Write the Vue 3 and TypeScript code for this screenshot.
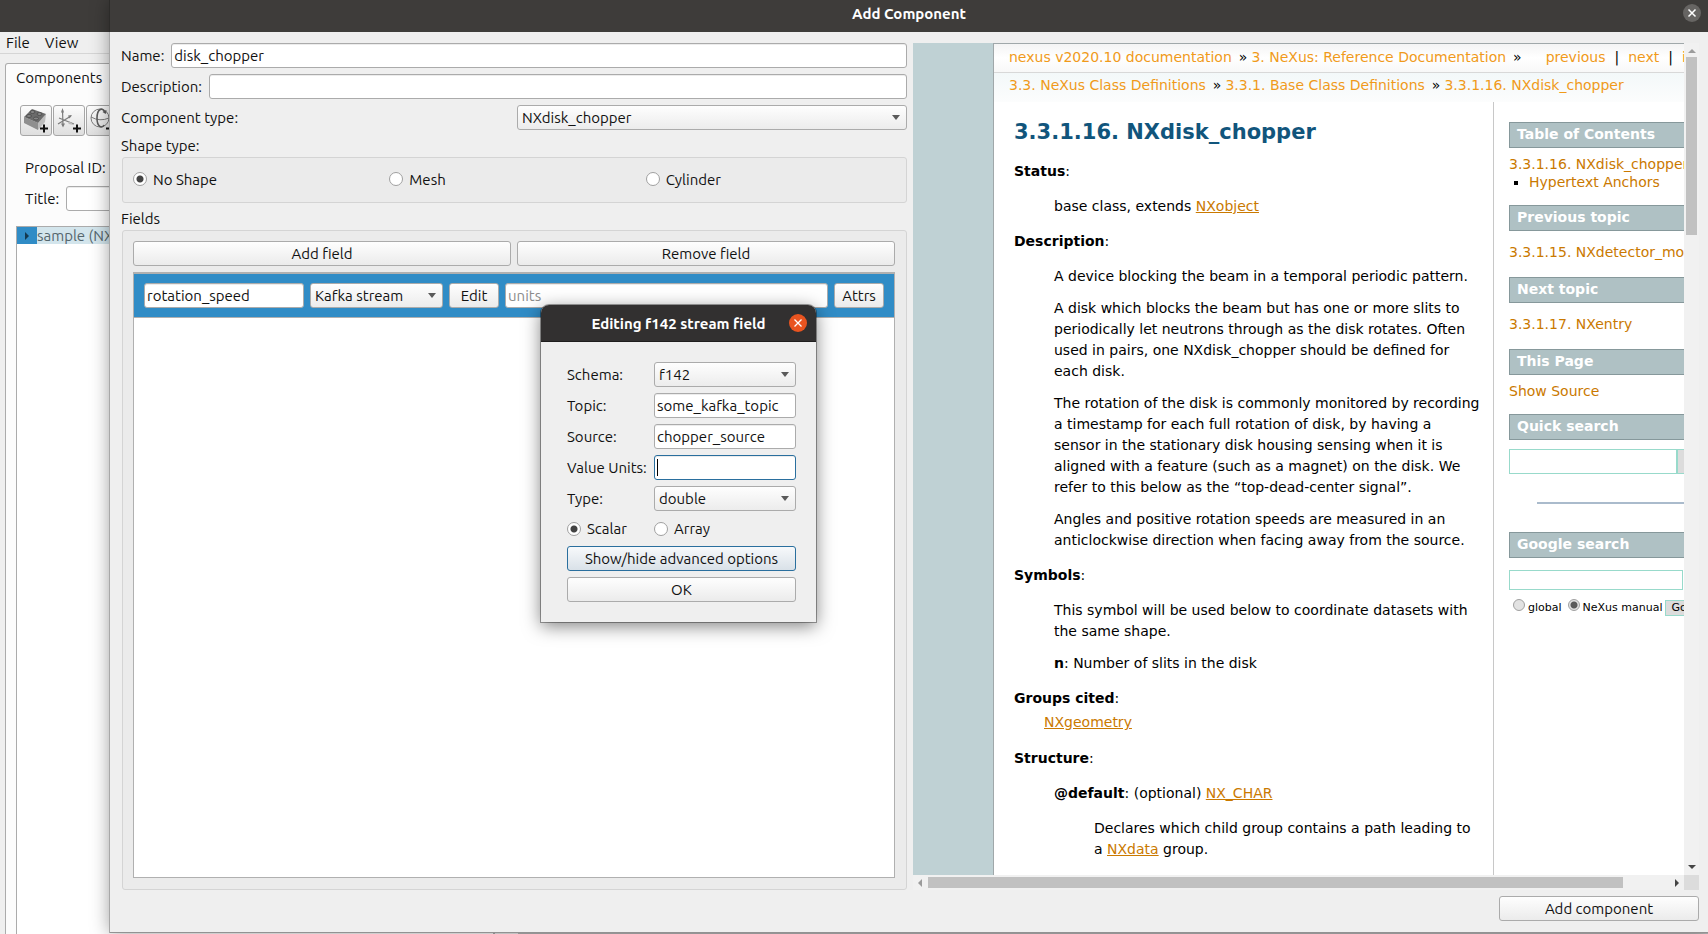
<script setup lang="ts">
import { ref } from 'vue'

const name = ref('disk_chopper')
const description = ref('')
const title = ref('')
const componentType = ref('NXdisk_chopper')
const shapes = ['No Shape', 'Mesh', 'Cylinder']
const shape = ref('No Shape')
const fieldName = ref('rotation_speed')
const fieldType = ref('Kafka stream')
const fieldUnits = ref('')
const schema = ref('f142')
const topic = ref('some_kafka_topic')
const source = ref('chopper_source')
const valueUnits = ref('')
const valueType = ref('double')
const arity = ref('Scalar')
const quickSearch = ref('')
const googleSearch = ref('')
const searchScope = ref('manual')
</script>

<template>
  <div class="desktop">
    <div class="main-window">
      <div class="titlebar"></div>
      <nav class="menubar">
        <button type="button">File</button>
        <button type="button">View</button>
      </nav>
      <div class="panes">
        <section class="tab-pane">
          <h2 class="tab">Components</h2>
          <div class="toolbar">
            <button type="button" class="tool" aria-label="Add component">
              <svg viewBox="0 0 32 31" width="32" height="31">
                <path d="M4 12 18 18 18 25 4 18Z" fill="#8f8f8f" />
                <path d="M18 18 26 9 25 17 18 25Z" fill="#bdbdbd" />
                <path d="M4 12 12 4 26 9 18 18Z" fill="#6b6b6b" />
                <g fill="#858585" stroke="#505050" stroke-width="1">
                  <ellipse cx="12.500" cy="7" rx="2.500" ry="1.500" />
                  <ellipse cx="19.500" cy="9" rx="2.500" ry="1.500" />
                  <ellipse cx="9" cy="11" rx="2.500" ry="1.500" />
                  <ellipse cx="16" cy="13.500" rx="2.500" ry="1.500" />
                </g>
                <path d="M20 23.500H28M24 19.500V27.500" stroke="#111" stroke-width="2" />
              </svg>
            </button>
            <button type="button" class="tool" aria-label="Add translation">
              <svg viewBox="0 0 32 31" width="32" height="31" fill="none" stroke="#7c7c7c">
                <path d="M9.500 5 10 21M5 19 18 11M6 13 21 19" stroke-width="1.200" />
                <path d="M8 7.500 9.500 3 11 7.500ZM8 18.500 10 22.500 12 18.500ZM15 10.500 19 10 16.500 13.500Z" fill="#7c7c7c" stroke="none" />
                <path d="M16 16 21 20 15.500 19Z" fill="#bbb" stroke="none" />
                <path d="M20 23.500H28M24 19.500V27.500" stroke="#111" stroke-width="2" />
              </svg>
            </button>
            <button type="button" class="tool" aria-label="Add rotation">
              <svg viewBox="0 0 32 31" width="32" height="31" fill="none" stroke="#7c7c7c">
                <circle cx="14" cy="13" r="9" />
                <path d="M5 12Q14 17 23 13" />
                <path d="M19 8C17 1 11 4 11 13S16 24 18 20" stroke="#5c5c5c" stroke-width="1.600" />
                <path d="M16.500 7 20 9 20.500 5Z" fill="#5c5c5c" stroke="none" />
                <path d="M20 23.500H28M24 19.500V27.500" stroke="#111" stroke-width="2" />
              </svg>
            </button>
          </div>
          <p class="proposal">Proposal ID:</p>
          <div class="title-row">
            <label for="title">Title:</label>
            <input id="title" v-model="title" class="box" type="text" />
          </div>
          <div class="tree">
            <div class="tree-row">
              <span class="branch"><i></i></span>
              <span class="leaf">sample (NXsample)</span>
            </div>
          </div>
        </section>
        <div class="viewer"></div>
      </div>
    </div>

    <section class="dialog" aria-label="Add Component">
      <header class="titlebar">
        <h1>Add Component</h1>
        <button type="button" class="close" aria-label="Close">
          <svg viewBox="0 0 18 18" width="18" height="18"><path d="M5.500 5.500 12.500 12.500M12.500 5.500 5.500 12.500" stroke="#fff" stroke-width="1.500" /></svg>
        </button>
      </header>

      <div class="dialog-body">
        <div class="form">
          <div class="lines">
            <div class="line">
              <label for="name">Name:</label>
              <input id="name" v-model="name" class="box" type="text" />
            </div>
            <div class="line">
              <label for="description">Description:</label>
              <input id="description" v-model="description" class="box" type="text" />
            </div>
            <div class="halves">
              <label for="ctype">Component type:</label>
              <span class="combo">
                <select id="ctype" v-model="componentType"><option>NXdisk_chopper</option></select>
              </span>
            </div>
          </div>
          <p class="caption">Shape type:</p>
          <div class="frame shapes">
            <label v-for="s in shapes" :key="s" class="radio">
              <input v-model="shape" type="radio" name="shape" :value="s" />{{ s }}
            </label>
          </div>
          <p class="caption">Fields</p>
          <div class="frame fields">
            <div class="halves">
              <button type="button" class="push">Add field</button>
              <button type="button" class="push">Remove field</button>
            </div>
            <div class="list">
              <div class="item">
                <input v-model="fieldName" class="box field-name" type="text" aria-label="Field name" />
                <span class="combo field-type">
                  <select v-model="fieldType" aria-label="Field type"><option>Kafka stream</option></select>
                </span>
                <button type="button" class="push small">Edit</button>
                <input v-model="fieldUnits" class="box field-units" type="text" placeholder="units" aria-label="Units" />
                <button type="button" class="push small">Attrs</button>
              </div>
            </div>
          </div>
        </div>

        <div class="docs">
          <div class="viewport">
            <div class="site">
              <div class="page">
                <nav class="crumbs">
                  <div class="crumb-row">
                    <a href="#">nexus v2020.10 documentation</a><i>»</i><a href="#">3. NeXus: Reference Documentation</a><i>»</i>
                    <span class="related"><a href="#">previous</a><b>|</b><a href="#">next</a><b>|</b><a href="#">index</a></span>
                  </div>
                  <div class="crumb-row second">
                    <a href="#">3.3. NeXus Class Definitions</a><i>»</i><a href="#">3.3.1. Base Class Definitions</a><i>»</i><a href="#">3.3.1.16. NXdisk_chopper</a>
                  </div>
                </nav>
                <div class="columns">
                  <article class="content">
                    <h2>3.3.1.16. NXdisk_chopper</h2>
                    <p><strong>Status</strong>:</p>
                    <div class="quote"><p>base class, extends <a href="#">NXobject</a></p></div>
                    <p><strong>Description</strong>:</p>
                    <div class="quote">
                      <p>A device blocking the beam in a temporal periodic pattern.</p>
                      <p>A disk which blocks the beam but has one or more slits to periodically let neutrons through as the disk rotates. Often used in pairs, one NXdisk_chopper should be defined for each disk.</p>
                      <p>The rotation of the disk is commonly monitored by recording a timestamp for each full rotation of disk, by having a sensor in the stationary disk housing sensing when it is aligned with a feature (such as a magnet) on the disk. We refer to this below as the “top-dead-center signal”.</p>
                      <p>Angles and positive rotation speeds are measured in an anticlockwise direction when facing away from the source.</p>
                    </div>
                    <p><strong>Symbols</strong>:</p>
                    <div class="quote">
                      <p>This symbol will be used below to coordinate datasets with the same shape.</p>
                      <p><strong>n</strong>: Number of slits in the disk</p>
                    </div>
                    <p class="cited"><strong>Groups cited</strong>:</p>
                    <p class="cited-list"><a href="#">NXgeometry</a></p>
                    <p><strong>Structure</strong>:</p>
                    <div class="quote">
                      <p class="term"><strong>@default</strong>: (optional) <a href="#">NX_CHAR</a></p>
                      <div class="quote"><p>Declares which child group contains a path leading to a <a href="#">NXdata</a> group.</p></div>
                    </div>
                  </article>
                  <aside class="sidebar">
                    <h3>Table of Contents</h3>
                    <div class="toc">
                      <a href="#">3.3.1.16. NXdisk_chopper</a>
                      <ul><li><a href="#">Hypertext Anchors</a></li></ul>
                    </div>
                    <h3>Previous topic</h3>
                    <p class="topic"><a href="#">3.3.1.15. NXdetector_module</a></p>
                    <h3>Next topic</h3>
                    <p class="topic"><a href="#">3.3.1.17. NXentry</a></p>
                    <h3>This Page</h3>
                    <p class="source"><a href="#">Show Source</a></p>
                    <h3>Quick search</h3>
                    <form class="quick" @submit.prevent>
                      <input v-model="quickSearch" type="text" aria-label="Quick search" /><button type="submit">Go</button>
                    </form>
                    <hr />
                    <h3>Google search</h3>
                    <form class="google" @submit.prevent>
                      <input v-model="googleSearch" class="query" type="text" aria-label="Google search" />
                      <div class="scope">
                        <label><input v-model="searchScope" type="radio" name="scope" value="global" />global</label>
                        <label><input v-model="searchScope" type="radio" name="scope" value="manual" />NeXus manual</label>
                        <button type="submit">Go</button>
                      </div>
                    </form>
                  </aside>
                </div>
              </div>
            </div>
          </div>
          <div class="scroll vertical"><i class="arrow up"></i><span class="track"><span class="thumb"></span></span><i class="arrow down"></i></div>
          <div class="scroll horizontal"><i class="arrow left"></i><span class="track"><span class="thumb"></span></span><i class="arrow right"></i></div>
          <div class="corner"></div>
        </div>
      </div>

      <footer class="dialog-footer">
        <button type="button" class="push add">Add component</button>
      </footer>
    </section>

    <section class="popup" aria-label="Editing f142 stream field">
      <header>
        <h2>Editing f142 stream field</h2>
        <button type="button" class="close orange" aria-label="Close">
          <svg viewBox="0 0 18 18" width="18" height="18"><path d="M5.500 5.500 12.500 12.500M12.500 5.500 5.500 12.500" stroke="#fff" stroke-width="1.300" /></svg>
        </button>
      </header>
      <div class="popup-body">
        <label for="schema">Schema:</label>
        <span class="combo"><select id="schema" v-model="schema"><option>f142</option></select></span>
        <label for="topic">Topic:</label>
        <input id="topic" v-model="topic" class="box" type="text" />
        <label for="source">Source:</label>
        <input id="source" v-model="source" class="box" type="text" />
        <label for="vunits">Value Units:</label>
        <span class="focused"><input id="vunits" v-model="valueUnits" class="box" type="text" /></span>
        <label for="vtype">Type:</label>
        <span class="combo"><select id="vtype" v-model="valueType"><option>double</option></select></span>
        <label class="radio"><input v-model="arity" type="radio" name="arity" value="Scalar" />Scalar</label>
        <label class="radio"><input v-model="arity" type="radio" name="arity" value="Array" />Array</label>
        <button type="button" class="push wide active">Show/hide advanced options</button>
        <button type="button" class="push wide">OK</button>
      </div>
    </section>
  </div>
</template>

<style>
html,
body {
  margin: 0;
  overflow: hidden;
}
</style>

<style scoped>
* {
  box-sizing: border-box;
}
.desktop {
  position: relative;
  height: 100vh;
  overflow: hidden;
  background: #efefef;
  color: #111;
  font: 15px/17px Ubuntu, 'Noto Sans', sans-serif;
}
h1, h2, h3, p, ul {
  margin: 0;
  padding: 0;
}
button, input, select {
  margin: 0;
  font: inherit;
  color: inherit;
}
.titlebar {
  height: 32px;
  background: #3e3c3a;
}

/* main window */
.main-window {
  height: 100%;
  display: flex;
  flex-direction: column;
}
.menubar {
  height: 22px;
  display: flex;
  align-items: center;
  gap: 15px;
  padding-left: 6px;
  border-bottom: 1px solid #d5d5d5;
}
.menubar button {
  padding: 0;
  border: 0;
  background: none;
}
.panes {
  flex: 1;
  display: flex;
  gap: 23px;
  padding: 9px 0 0 5px;
}
.tab-pane {
  flex: 0 0 490px;
  border: 1px solid #ababab;
  border-bottom: 0;
  border-radius: 3px 3px 0 0;
  background: #fcfcfc;
  padding-left: 10px;
  display: flex;
  flex-direction: column;
}
.viewer {
  flex: 1;
  background: #b8b8b8;
}
.tab {
  font-size: 15px;
  font-weight: 400;
  line-height: 27px;
}
.toolbar {
  display: flex;
  gap: 1px;
  margin-top: 14px;
  padding-left: 4px;
}
.tool {
  width: 32px;
  height: 31px;
  padding: 0;
  border: 1px solid #a6a6a6;
  border-radius: 3px;
  background: linear-gradient(#fcfcfc, #dedede);
}
.tool svg {
  display: block;
  margin: -1px;
}
.proposal {
  margin: 23px 0 0 9px;
}
.title-row {
  display: flex;
  align-items: center;
  gap: 7px;
  margin: 10px 0 0 9px;
}
.tree {
  flex: 1;
  margin-top: 15px;
  border: 1px solid #ababab;
  border-bottom: 0;
  background: #fff;
}
.tree-row {
  display: flex;
  height: 17px;
}
.branch {
  width: 20px;
  background: #308cc6;
  display: flex;
  align-items: center;
  padding-left: 8px;
}
.branch i {
  border-left: 4px solid #14394f;
  border-top: 4px solid transparent;
  border-bottom: 4px solid transparent;
}
.leaf {
  flex: 1;
  background: #d3e5ec;
  color: #55666d;
}

/* shared controls */
.box {
  height: 25px;
  min-width: 0;
  flex: 1;
  padding: 0 2px;
  border: 1px solid #ababab;
  border-radius: 3px;
  background: #fff;
  box-shadow: inset 0 1px 0 #ececec;
  outline: none;
}
.box::placeholder {
  color: #8c8c8c;
  opacity: 1;
}
.combo {
  position: relative;
  display: flex;
}
.combo::after {
  content: '';
  position: absolute;
  right: 7px;
  top: 10px;
  border-top: 5px solid #5a5a5a;
  border-left: 4px solid transparent;
  border-right: 4px solid transparent;
  pointer-events: none;
}
.combo select {
  appearance: none;
  width: 100%;
  height: 25px;
  padding: 0 20px 0 4px;
  border: 1px solid #ababab;
  border-radius: 3px;
  background: linear-gradient(#fefefe, #ececec);
  outline: none;
}
.push {
  height: 25px;
  padding: 0 6px;
  border: 1px solid #ababab;
  border-radius: 3px;
  background: linear-gradient(#fefefe, #ebebeb);
}
.push.active {
  border-color: #2a6f9e;
  background: linear-gradient(#f7f9fb, #d9e1e8);
}
.radio {
  display: flex;
  align-items: center;
  gap: 6px;
}
.radio input {
  appearance: none;
  width: 14px;
  height: 14px;
  border: 1px solid #a0a0a0;
  border-radius: 50%;
  background: #fff;
}
.radio input:checked {
  background: radial-gradient(circle, #434343 0 3px, #fff 4px);
}

/* Add Component dialog */
.dialog {
  position: absolute;
  inset: 0 0 1px 110px;
  display: flex;
  flex-direction: column;
  background: #efefef;
  border-bottom: 1px solid #929292;
  box-shadow: -1px 0 0 #a8a8a8, 0 0 18px rgba(0, 0, 0, 0.4);
}
.titlebar h1 {
  font-size: 15px;
  line-height: 28px;
  font-weight: 700;
  color: #fff;
  text-align: center;
}
.dialog .titlebar {
  position: relative;
  box-shadow: -1px 0 0 #2c2b29;
  flex: none;
}
.close {
  width: 18px;
  height: 18px;
  padding: 0;
  border: 0;
  border-radius: 50%;
  background: #676563;
}
.close svg {
  display: block;
}
.titlebar .close {
  position: absolute;
  right: 7px;
  top: 4px;
}
.dialog-body {
  flex: 1;
  min-height: 0;
  display: grid;
  grid-template-columns: 1fr 1fr;
  gap: 6px;
  padding: 11px 9px 0 11px;
}
.form {
  display: flex;
  flex-direction: column;
  min-width: 0;
}
.lines {
  display: flex;
  flex-direction: column;
  gap: 6px;
}
.line {
  display: flex;
  align-items: center;
  gap: 7px;
}
.halves {
  display: grid;
  grid-template-columns: 1fr 1fr;
  align-items: center;
  gap: 6px;
}
.caption {
  margin: 7px 0 3px;
}
.frame {
  border: 1px solid #d4d4d4;
  border-radius: 3px;
  background: #ebebeb;
  margin-left: 1px;
}
.shapes {
  display: grid;
  grid-template-columns: repeat(3, 1fr);
  height: 46px;
  padding: 0 4px 2px 10px;
}
.fields {
  flex: 1;
  display: flex;
  flex-direction: column;
  gap: 6px;
  padding: 10px 11px 11px 10px;
}
.list {
  flex: 1;
  border: 1px solid #b0b0b0;
  background: #fff;
}
.item {
  display: flex;
  gap: 6px;
  padding: 9px 10px;
  border-top: 1px solid #b0b0b0;
  border-bottom: 1px solid #b0b0b0;
  background: #308cc6;
}
.field-name {
  flex: 0 0 160px;
}
.field-type {
  flex: 0 0 133px;
}
.small {
  flex: 0 0 50px;
}

/* documentation browser */
.docs {
  display: grid;
  grid-template-columns: minmax(0, 1fr) 15px;
  grid-template-rows: minmax(0, 1fr) 15px;
  min-height: 0;
  min-width: 0;
}
.viewport {
  overflow: hidden;
  background: #bfd1d4;
  color: #000;
  font: 14px/21px 'DejaVu Sans', sans-serif;
}
.site {
  min-width: 822px;
  height: 100%;
  padding-left: 80px;
}
.page {
  height: 100%;
  border: 1px solid #a0a8aa;
  border-width: 1px 0 0 1px;
  background: #fff;
  display: flex;
  flex-direction: column;
}
.crumbs {
  flex: none;
  white-space: nowrap;
}
.crumb-row {
  display: flex;
  height: 29px;
  align-items: center;
  padding-left: 15px;
  padding-bottom: 2px;
  border-bottom: 1px solid #d8d8d8;
  background: linear-gradient(#f4f4f4, #fff 50%, #f8f8f8);
}
.crumb-row.second {
  border: 0;
  padding-bottom: 4px;
  background: linear-gradient(#f3f8f9, #fcfdfd);
}
.crumbs a {
  color: #f09a1a;
  text-decoration: none;
}
.crumbs i {
  margin: 0 4px 0 7px;
  font-style: normal;
}
.related {
  margin-left: 20px;
}
.related b {
  margin: 0 9px;
  font-weight: 400;
}
.columns {
  flex: 1;
  min-height: 0;
  display: flex;
}
.content {
  flex: 1;
  min-width: 0;
  padding: 17px 12px 0 20px;
}
.content h2 {
  margin-bottom: 16px;
  color: #11557c;
  font-size: 21px;
  line-height: 26px;
}
.content p {
  margin-bottom: 14px;
}
.content a {
  color: #ca7900;
  text-decoration: underline;
}
.content .quote {
  padding-left: 40px;
}
.quote p:not(:last-child) {
  margin-bottom: 11px;
}
.content .quote .term {
  margin-bottom: 14px;
}
.content .cited {
  margin-bottom: 3px;
}
.content .cited-list {
  padding-left: 30px;
  margin-bottom: 15px;
}
.sidebar {
  flex: 0 0 242px;
  padding: 20px 0 0 15px;
  border-left: 1px solid #c8c8c8;
  white-space: nowrap;
}
.sidebar h3 {
  height: 26px;
  padding-left: 7px;
  border: 1px solid #86989b;
  background: #afc1c4;
  color: #fff;
  font-size: 14px;
  line-height: 23px;
}
.sidebar a {
  color: #ca7900;
  text-decoration: none;
}
.toc {
  padding: 7px 0 14px;
  line-height: 18px;
}
.toc ul {
  padding-left: 20px;
  list-style: square;
}
.topic {
  padding: 11px 0 14px;
}
.source {
  padding: 6px 0 12px;
}
.quick {
  display: flex;
  padding-top: 9px;
}
.quick input {
  width: 168px;
  height: 25px;
  border: 1px solid #98dacb;
}
.quick button,
.scope button {
  border: 1px solid #98dacb;
  background: #dcdcdc;
}
.sidebar hr {
  height: 2px;
  margin: 28px 0 28px 28px;
  border: 0;
  background: #abc;
}
.google {
  padding-top: 12px;
}
.query {
  display: block;
  width: 174px;
  height: 20px;
  border: 1px solid #98dacb;
}
.scope {
  display: flex;
  align-items: center;
  gap: 6px;
  margin-top: 9px;
  padding-left: 4px;
  font-size: 11px;
  line-height: 14px;
}
.scope label {
  display: flex;
  align-items: center;
  gap: 3px;
}
.scope input {
  appearance: none;
  width: 12px;
  height: 12px;
  margin-bottom: 6px;
  border: 1px solid #a0a0a0;
  border-radius: 50%;
  background: #e2e2e2;
}
.scope input:checked {
  background: radial-gradient(circle, #5a5a5a 0 3px, #e2e2e2 4px);
}
.scope button {
  height: 16px;
  padding: 0 6px;
  margin-left: -4px;
}
.scroll {
  display: flex;
  align-items: center;
  justify-content: space-between;
  background: #f1f1f1;
}
.vertical {
  flex-direction: column;
  padding: 6px 0;
}
.horizontal {
  padding: 0 5px;
}
.track {
  flex: 1;
}
.thumb {
  display: block;
  background: #c1c1c1;
}
.vertical .track {
  padding-top: 4px;
}
.vertical .thumb {
  width: 11px;
  height: 22%;
}
.horizontal .track {
  padding-left: 6px;
}
.horizontal .thumb {
  height: 11px;
  width: 93%;
}
.arrow {
  border: 4px solid transparent;
}
.up {
  border-top-width: 0;
  border-bottom-color: #9c9c9c;
}
.down {
  border-bottom-width: 0;
  border-top-color: #454545;
}
.left {
  border-left-width: 0;
  border-right-color: #9c9c9c;
}
.right {
  border-right-width: 0;
  border-left-color: #454545;
}
.corner {
  background: #dcdcdc;
}
.dialog-footer {
  display: flex;
  justify-content: flex-end;
  padding: 6px 9px 11px;
}
.add {
  width: 200px;
}

/* stream field editor */
.popup {
  position: absolute;
  left: 541px;
  top: 305px;
  width: 275px;
  border-radius: 8px 8px 0 0;
  background: #efefef;
  box-shadow: 0 0 0 1px rgba(0, 0, 0, 0.35), 0 4px 18px rgba(0, 0, 0, 0.5);
}
.popup header {
  position: relative;
  height: 37px;
  border-radius: 8px 8px 0 0;
  border-bottom: 1px solid #1f1e1e;
  background: #323030;
}
.popup h2 {
  font-size: 15px;
  line-height: 37px;
  color: #fff;
  text-align: center;
}
.popup .close {
  position: absolute;
  right: 9px;
  top: 9px;
}
.popup .orange {
  background: #e95420;
}
.popup-body {
  display: grid;
  grid-template-columns: 81px 1fr;
  gap: 6px;
  align-items: center;
  padding: 20px 20px 20px 26px;
}
.popup-body .radio {
  height: 23px;
}
.popup-body .box {
  width: 100%;
}
.focused {
  position: relative;
  display: flex;
}
.focused .box {
  border-color: #2a6f9e;
}
.focused::after {
  content: '';
  position: absolute;
  left: 3px;
  top: 4px;
  width: 1px;
  height: 17px;
  background: #000;
}
.wide {
  grid-column: 1 / -1;
}
</style>
